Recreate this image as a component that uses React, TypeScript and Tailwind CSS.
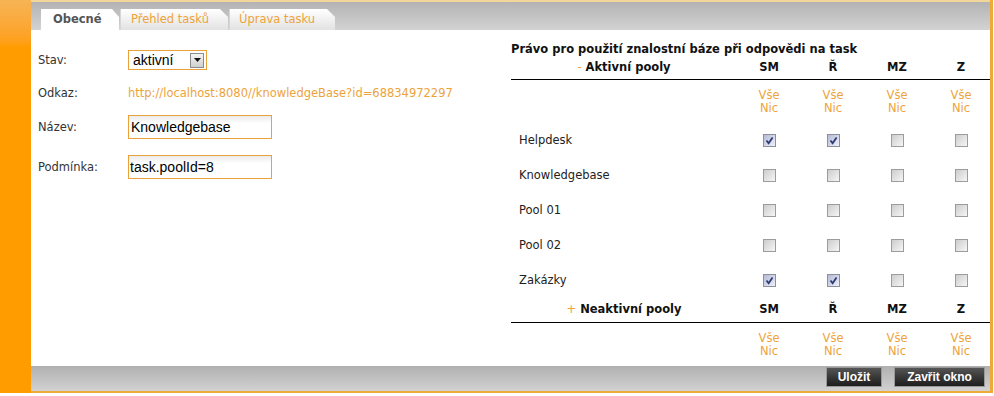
import React from "react";

const pools = [
  { name: "Helpdesk", checks: [true, true, false, false] },
  { name: "Knowledgebase", checks: [false, false, false, false] },
  { name: "Pool 01", checks: [false, false, false, false] },
  { name: "Pool 02", checks: [false, false, false, false] },
  { name: "Zakázky", checks: [true, true, false, false] },
];

const cols = ["SM", "Ř", "MZ", "Z"];

function Checkbox({ checked }: { checked: boolean }) {
  return (
    <span
      className={
        checked
          ? "flex h-[13px] w-[13px] items-center justify-center border border-[#8e8f9c] bg-gradient-to-br from-[#b5bad4] to-[#eff0f8]"
          : "block h-[13px] w-[13px] border border-[#9c9c9c] bg-gradient-to-br from-[#cdcdcd] to-[#f6f6f6]"
      }
    >
      {checked && (
        <svg width="9" height="9" viewBox="0 0 9 9">
          <path d="M1.5 4.5 L3.6 7.2 L7.6 1.4" fill="none" stroke="#2c3b78" strokeWidth="1.8" />
        </svg>
      )}
    </span>
  );
}

function PoolHeader({ sign, title, h }: { sign: string; title: string; h: string }) {
  return (
    <div className={"grid grid-cols-[226px_64px_64px_64px_64px] items-center border-b border-black font-bold text-[#111] " + h}>
      <div className="text-center">
        <span className="mr-[4px] font-normal text-[#eda33b]">{sign}</span>
        {title}
      </div>
      {cols.map((c) => (
        <div key={c} className="text-center">
          {c}
        </div>
      ))}
    </div>
  );
}

function AllNone() {
  return (
    <div className="grid grid-cols-[226px_64px_64px_64px_64px] pt-[9px] pb-[8px] leading-[13px] text-[#eda33b]">
      <div />
      {cols.map((c) => (
        <div key={c} className="text-center">
          <div>Vše</div>
          <div>Nic</div>
        </div>
      ))}
    </div>
  );
}

const App = () => {
  return (
    <div className="flex h-[396px] w-[994px] bg-white font-['DejaVu_Sans',sans-serif] text-[11.5px] text-[#333]">
      {/* orange side bar */}
      <div className="h-[393px] w-[31px] bg-gradient-to-b from-[#f6b454] via-[#ff9d00] via-[12%] to-[#ff9c00]" />

      <div className="flex h-[393px] w-[962px] flex-col border-r-[3px] border-[#f0aa3a]">
        {/* tab strip */}
        <div className="flex h-[30px] items-end border-t-2 border-[#f3d69b] bg-gradient-to-b from-[#b3b3b3] to-[#d3d3d3] pl-[10px]">
          <div className="flex h-[21px] w-[78px] items-center bg-white pl-[12px] font-bold text-[#555] [clip-path:polygon(0_0,calc(100%-7px)_0,100%_8px,100%_100%,0_100%)]">
            Obecné
          </div>
          <div className="ml-[1px] flex h-[21px] w-[108px] items-center border-l border-[#d6d6d6] bg-gradient-to-b from-white to-[#e2e2e2] pl-[10px] text-[#eda33b] [clip-path:polygon(0_0,calc(100%-8px)_0,100%_8px,100%_100%,0_100%)]">
            Přehled tasků
          </div>
          <div className="ml-[1px] flex h-[21px] w-[106px] items-center border-l border-[#d6d6d6] bg-gradient-to-b from-white to-[#e2e2e2] pl-[9px] text-[#eda33b] [clip-path:polygon(0_0,calc(100%-8px)_0,100%_8px,100%_100%,0_100%)]">
            Úprava tasku
          </div>
        </div>

        {/* content */}
        <div className="flex h-[336px] bg-white">
          <div className="w-[480px] pl-[7px] pt-[20px]">
            <div className="flex h-[20px] items-center">
              <div className="w-[90px] pt-[2px]">Stav:</div>
              <div className="flex h-[20px] w-[79px] items-center justify-between border border-[#e9a13a] bg-white pl-[4px] pr-[2px] font-['Liberation_Sans',sans-serif] text-[14px] text-black">
                <span>aktivní</span>
                <span className="flex h-[15px] w-[14px] items-center justify-center border border-[#8c8c8c] bg-gradient-to-b from-[#f4f4f4] to-[#cfcfcf]">
                  <svg width="7" height="4" viewBox="0 0 7 4">
                    <path d="M0 0 H7 L3.5 4 Z" fill="#111" />
                  </svg>
                </span>
              </div>
            </div>
            <div className="mt-[17px] flex h-[14px] items-center">
              <div className="w-[90px]">Odkaz:</div>
              <div className="text-[#eda33b]">http://localhost:8080//knowledgeBase?id=68834972297</div>
            </div>
            <div className="mt-[14px] flex h-[24px] items-center">
              <div className="w-[90px] pt-[1px]">Název:</div>
              <div className="flex h-[24px] w-[144px] items-center border border-[#e9a13a] bg-gradient-to-b from-[#ececec] via-white via-[35%] to-white pl-[2px] font-['Liberation_Sans',sans-serif] text-[14px] text-black">
                Knowledgebase
              </div>
            </div>
            <div className="mt-[16px] flex h-[24px] items-center">
              <div className="w-[90px] pt-[1px]">Podmínka:</div>
              <div className="flex h-[24px] w-[144px] items-center border border-[#e9a13a] bg-gradient-to-b from-[#ececec] via-white via-[35%] to-white pl-[1px] font-['Liberation_Sans',sans-serif] text-[14px] text-black">
                task.poolId=8
              </div>
            </div>
          </div>

          <div className="w-[479px] overflow-hidden pt-[12px]">
            <div className="h-[14px] leading-[14px] font-bold text-[#111]">
              Právo pro použití znalostní báze při odpovědi na task
            </div>
            <PoolHeader sign="-" title="Aktivní pooly" h="h-[24px]" />
            <AllNone />
            {pools.map((p) => (
              <div key={p.name} className="grid h-[35px] grid-cols-[226px_64px_64px_64px_64px] items-center text-[#222]">
                <div className="pl-[8px] pt-[1px]">{p.name}</div>
                {p.checks.map((c, i) => (
                  <div key={i} className="flex justify-center">
                    <Checkbox checked={c} />
                  </div>
                ))}
              </div>
            ))}
            <PoolHeader sign="+" title="Neaktivní pooly" h="h-[25px]" />
            <AllNone />
          </div>
        </div>

        {/* bottom bar */}
        <div className="flex h-[27px] items-start justify-end gap-[12px] border-b-2 border-[#f0aa3a] bg-gradient-to-b from-[#b0b0b0] to-[#d2d2d2] pr-[5px] pt-[1px] font-['Liberation_Sans',sans-serif] text-[12px] font-bold text-white">
          <button className="flex h-[20px] w-[56px] items-center justify-center border border-[#9a9a9a] bg-gradient-to-b from-[#555] to-[#1e1e1e]">
            Uložit
          </button>
          <button className="flex h-[20px] w-[91px] items-center justify-center border border-[#9a9a9a] bg-gradient-to-b from-[#555] to-[#1e1e1e]">
            Zavřit okno
          </button>
        </div>
      </div>
    </div>
  );
};

export default App;
